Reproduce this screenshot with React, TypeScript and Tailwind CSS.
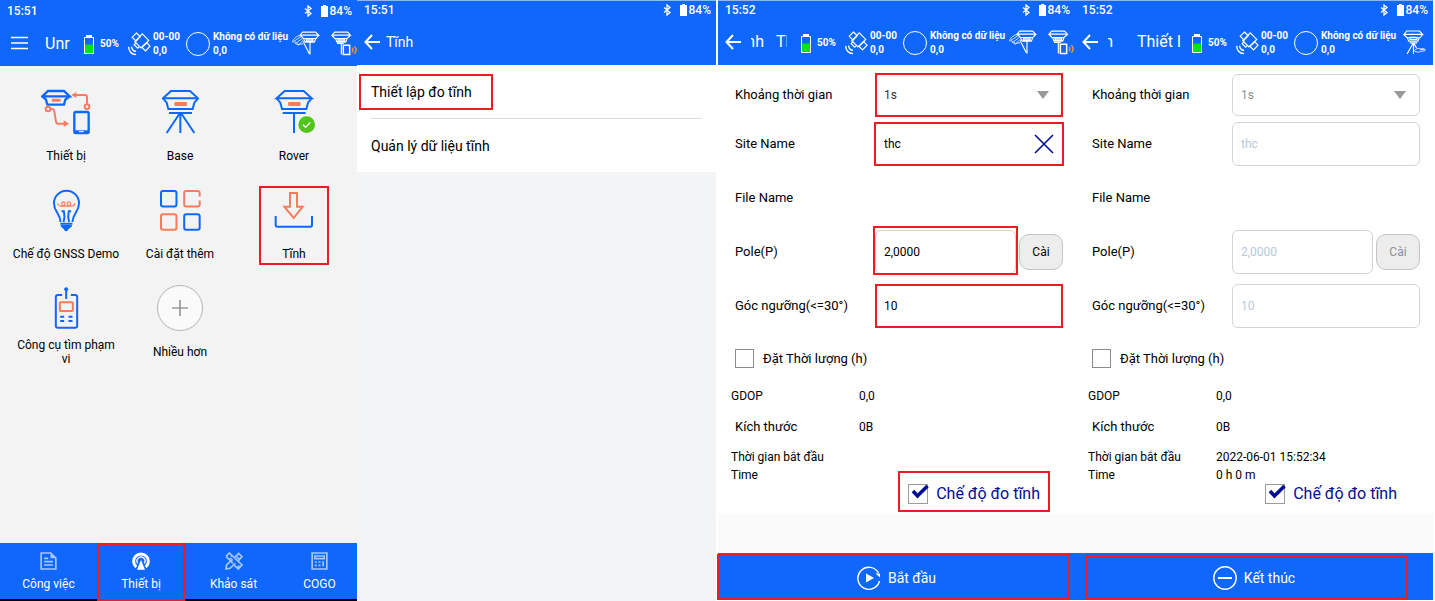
import React, { useState } from "react";

const BLUE = "#1067fb";
const ORANGE = "#f47d5f";

/* ---------- status / header icons ---------- */

const BluetoothIcon = () => (
  <svg viewBox="0 0 8 12" className="h-[12px] w-[8px]" fill="none" stroke="#fff" strokeWidth="1.3">
    <path d="M1 3.5 7 8.5 4 11V1l3 2.5-6 5" />
  </svg>
);

const PhoneBatteryIcon = () => (
  <svg viewBox="0 0 7 12" className="h-[12px] w-[7px]" fill="#fff">
    <path d="M2 0h3v1h2v11H0V1h2z" />
  </svg>
);

const MenuIcon = () => (
  <svg viewBox="0 0 17 14" className="h-[14px] w-[17px]" stroke="#fff" strokeWidth="1.7">
    <path d="M0 1.5h17M0 7h17M0 12.5h17" />
  </svg>
);

const ArrowLeftIcon = () => (
  <svg viewBox="0 0 16 16" className="h-[16px] w-[16px]" fill="none" stroke="#fff" strokeWidth="2">
    <path d="M8 1 1.5 8 8 15M1.5 8H16" />
  </svg>
);

const BatteryIcon = () => (
  <svg viewBox="0 0 10 19" className="h-[19px] w-[10px]">
    <path d="M2 0h6v2H2z" fill="#fff" />
    <path d="M.5 2.5h9v16h-9z" fill="none" stroke="#fff" />
    <path d="M1 9.5h8V18H1z" fill="#00e613" />
  </svg>
);

const SatelliteIcon = () => (
  <svg viewBox="378 92 72 74" className="h-[24px] w-[24px]" fill="none" stroke="#fff" strokeWidth="3.6">
    <path d="M406 95 418 107 405 120 393 108z" />
    <path d="M424 98 444 118 420 141 401 122z" />
    <path d="M438 125 448 136 434 150 423 139z" />
    <path d="M404 126 399 131 410 142 415 137" />
    <path d="M382 138c1 14 10 23 23 24M391 137c1 10 6 14 14 15" strokeWidth="4" />
  </svg>
);

const ReceiverHandIcon = () => (
  <svg viewBox="879 94 84 74" className="h-[25px] w-[28px]" fill="none" stroke="#fff" strokeWidth="3.4">
    <path d="M911 97h39l9 9h-56zM905 107l8 9h38l8-9M914 117l4 10h28l4-10M922 118h20v5h-20zM933 128v36M915 130l16 32" />
    <path
      d="M904 107c-10 1-20 8-24 19 8 0 15 2 18 8l14-2 2-9M885 124l22-14M893 128l17-12M888 130l10 6 14-14"
      strokeWidth="3"
      opacity=".75"
    />
  </svg>
);

const ReceiverPhoneIcon = () => (
  <svg viewBox="994 94 78 74" className="h-[25px] w-[26px]" fill="none" stroke="#fff" strokeWidth="3.4">
    <path d="M1005 97h39l8 9h-55zM997 107l9 9h36l10-9M1008 117l4 10h26l4-10M1015 118h20v5h-20zM1012 131h20M1025 132v32" />
    <path d="M1031 136h19v28h-19z" fill={BLUE} strokeWidth="4.5" />
    <path d="M1057 144c4 4 4 9 0 13M1064 139c7 7 7 16 0 23" stroke="#f09a28" strokeWidth="4" />
  </svg>
);

const ReceiverTripodIcon = () => (
  <svg viewBox="1002 91 68 74" className="h-[25px] w-[23px]" fill="none" stroke="#fff" strokeWidth="3.4">
    <path d="M1013 94h38l9 10h-55zM1005 105l9 9h38l8-9M1015 115l4 9h27l4-9M1023 113h20v6h-20zM1022 129h22M1032 130l-18 32M1033 130v32M1034 130l8 14" />
    <path d="M1036 153c4-8 12-9 18-6 8-2 14 0 14 3s-6 4-14 4c-6 4-12 3-18-1zM1052 149h12" strokeWidth="2.5" />
  </svg>
);

/* ---------- home screen icons ---------- */

const ReceiverHead = () => (
  <>
    <path d="M3 25 27 3h57l24 22z" />
    <path d="M3 25 14 38l5 19h73l5-19 11-13" />
    <rect x="37" y="36" width="38" height="12" rx="4" fill={ORANGE} stroke="none" />
    <path d="M21 69h69" />
  </>
);

const DeviceIcon = () => (
  <svg viewBox="122 270 150 138" className="h-[46px] w-[50px]" fill="none" stroke={BLUE} strokeWidth="7">
    <path d="M126 292 143 276h48l17 16zM126 292l11 10 4 15h50l4-15 13-10" />
    <rect x="154" y="299" width="27" height="9" rx="3" fill={ORANGE} stroke="none" />
    <rect x="222" y="339" width="43" height="63" rx="4" />
    <path d="M223 398h41" strokeWidth="8" />
    <path d="M236 398h14" stroke="#fff" strokeWidth="3" />
    <g stroke={ORANGE} strokeWidth="6">
      <circle cx="260" cy="323" r="7" />
      <path d="M260 314v-20q0-6-6-6h-28" />
      <path d="M228 279v18l-15-9z" fill={ORANGE} stroke="none" />
      <circle cx="143" cy="330" r="7" />
      <path d="M151 330h4q6 0 7 8l5 30q1 6 7 6h18" />
      <path d="M190 364v20l16-10z" fill={ORANGE} stroke="none" />
    </g>
  </svg>
);

const BaseIcon = () => (
  <svg viewBox="0 0 111 132" className="h-[44px] w-[37px]" fill="none" stroke={BLUE} strokeWidth="6">
    <ReceiverHead />
    <path d="M55 70v59M52 72 14 129M59 72l38 57" />
  </svg>
);

const RoverIcon = () => (
  <svg viewBox="-8 0 126 132" className="h-[44px] w-[42px]" fill="none" stroke={BLUE} strokeWidth="6">
    <ReceiverHead />
    <path d="M55 70v59" />
    <circle cx="93" cy="104" r="25" fill="#52c41a" stroke="none" />
    <path d="m82 104 8 8 14-15" stroke="#fff" strokeWidth="4" />
  </svg>
);

const BulbIcon = () => (
  <svg viewBox="155 27 88 130" className="h-[43px] w-[29px]" fill="none" stroke={BLUE} strokeWidth="6">
    <path d="M181 127c-1-27-20-30-20-57a38 38 0 0 1 76 0c0 27-19 30-20 57" />
    <path d="M184 94h7q4 16-1 33M213 94h-7q-4 16 1 33M180 132h37M182 139h33" />
    <path d="M184 141h29q-4 6-8 7-2 7-7 7t-7-7q-4-1-7-7z" fill={BLUE} stroke="none" />
    <path
      d="M172 70c2 10 10 10 16 8 10-3 8-12 2-12-8 0-8 12 2 13h12c10-1 10-13 2-13-6 0-8 9 2 12 6 2 14 2 17-8"
      stroke={ORANGE}
      strokeWidth="3.6"
    />
  </svg>
);

const SettingsGridIcon = () => (
  <svg viewBox="0 0 122 122" className="h-[41px] w-[41px]" fill="none" stroke={BLUE} strokeWidth="6">
    <rect x="3" y="3" width="46" height="46" rx="6" />
    <path d="M118 19V9q0-6-6-6H78q-6 0-6 6v34q0 6 6 6h34q6 0 6-6V31" stroke={ORANGE} />
    <rect x="3" y="72" width="46" height="46" rx="6" stroke={ORANGE} />
    <rect x="72" y="72" width="46" height="46" rx="6" />
  </svg>
);

const StaticIcon = () => (
  <svg viewBox="825 33 120 114" className="h-[38px] w-[40px]" fill="none" stroke={BLUE} strokeWidth="6">
    <path d="M830 108v27q0 5 5 5h99q5 0 5-5v-27" />
    <path d="M873 39h21v41h17l-27 34-28-34h17z" stroke={ORANGE} />
  </svg>
);

const FinderIcon = () => (
  <svg viewBox="162 321 74 126" className="h-[42px] w-[25px]" fill="none" stroke={BLUE} strokeWidth="6">
    <path d="M186 345h-13q-6 0-6 6v86q0 6 6 6h52q6 0 6-6v-86q0-6-6-6h-13M198 328v29" />
    <circle cx="198" cy="328" r="6" fill={BLUE} stroke="none" />
    <rect x="179" y="367" width="39" height="26" rx="2" stroke={ORANGE} />
    <path d="M180 410h12M205 410h12M180 423h12M205 423h12" />
  </svg>
);

const MoreIcon = () => (
  <svg viewBox="0 0 46 46" className="h-[46px] w-[46px]" fill="none">
    <circle cx="23" cy="23" r="22.5" fill="#fafafa" stroke="#b5b5b5" />
    <path d="M23 15v16M15 23h16" stroke="#9a9a9a" strokeWidth="1.7" />
  </svg>
);

/* ---------- tab bar icons ---------- */

const JobIcon = () => (
  <svg viewBox="0 0 50 54" className="h-[18px] w-[17px]" fill="none" stroke="#a6c6ff" strokeWidth="5">
    <path d="M3 3h29l15 15v33H3zM12 19h12M12 29h26M12 39h26" />
    <path d="M31 3v16h16z" fill="#a6c6ff" stroke="none" />
  </svg>
);

const AntennaIcon = () => (
  <svg viewBox="0 0 54 54" className="h-[18px] w-[18px]" fill="none" stroke="#fff">
    <path d="M13 45a22 22 0 1 1 28 0" strokeWidth="9" />
    <path d="M17 34a12 12 0 1 1 20 0" strokeWidth="4" />
    <path d="M27 24 39 53H15z" fill="#fff" stroke="none" />
  </svg>
);

const SurveyIcon = () => (
  <svg viewBox="0 0 54 54" className="h-[18px] w-[18px]" fill="none" stroke="#a6c6ff" strokeWidth="5">
    <path d="M3 13 13 3l38 36-11 12-12-11M24 34 3 13M14 23l5-5M22 9l-4 5M38 46l5-5" />
    <path d="m30 15 11-11 10 10-11 12M23 22 5 38 3 51l12-2 16-15M33 12l9 9" />
  </svg>
);

const CogoIcon = () => (
  <svg viewBox="0 0 50 54" className="h-[18px] w-[17px]" fill="none" stroke="#a6c6ff" strokeWidth="5">
    <path d="M3 3h44v48H3zM11 12h28v8H11z" />
    <path d="M11 30h6M22 30h6M11 40h6M22 40h6M36 28v15" />
  </svg>
);

/* ---------- shared parts ---------- */

const StatusBar = ({ time }: { time: string }) => (
  <div className="flex h-[18px] items-center pl-[7px] pr-[5px] text-[12px] font-medium leading-[18px]">
    <span className="flex-1">{time}</span>
    <BluetoothIcon />
    <span className="ml-[9px] flex items-center gap-[2px]">
      <PhoneBatteryIcon />
      84%
    </span>
  </div>
);

const GnssStatus = () => (
  <div className="flex shrink-0 items-center whitespace-nowrap pt-[2px] text-[10px] font-bold leading-[14px]">
    <BatteryIcon />
    <span className="ml-[6px] w-[20px]">50%</span>
    <span className="ml-[7px]">
      <SatelliteIcon />
    </span>
    <span className="ml-[2px] w-[27px]">
      00-00
      <br />
      0,0
    </span>
    <span className="ml-[6px] h-[24px] w-[24px] rounded-full border border-white" />
    <span className="ml-[3px] w-[76px]">
      Không có dữ liệu
      <br />
      0,0
    </span>
  </div>
);

const Frame = ({ className }: { className: string }) => (
  <span className={`pointer-events-none absolute border-2 border-[#ed1c24] ${className}`} />
);

/* ---------- screen 1 ---------- */

const apps = [
  { name: "Thiết bị", icon: <DeviceIcon /> },
  { name: "Base", icon: <BaseIcon /> },
  { name: "Rover", icon: <RoverIcon /> },
  { name: "Chế độ GNSS Demo", icon: <BulbIcon /> },
  { name: "Cài đặt thêm", icon: <SettingsGridIcon /> },
  { name: "Tĩnh", icon: <StaticIcon />, marked: true },
  { name: "Công cụ tìm phạm vi", icon: <FinderIcon /> },
  { name: "Nhiều hơn", icon: <MoreIcon /> },
];

const tabs = [
  { name: "Công việc", icon: <JobIcon /> },
  { name: "Thiết bị", icon: <AntennaIcon />, marked: true },
  { name: "Khảo sát", icon: <SurveyIcon /> },
  { name: "COGO", icon: <CogoIcon /> },
];

const HomeScreen = () => (
  <section className="flex min-w-0 flex-col bg-[#f3f3f3]">
    <header className="h-[66px] bg-[#1067fb] pt-[2px] text-white">
      <StatusBar time="15:51" />
      <div className="flex h-[46px] items-center pl-[11px]">
        <button aria-label="Menu">
          <MenuIcon />
        </button>
        <h1 className="ml-[17px] min-w-0 flex-1 overflow-hidden pt-[2px] text-[16px]">Unr</h1>
        <GnssStatus />
        <span className="ml-[3px] flex gap-[11px]">
          <ReceiverHandIcon />
          <ReceiverPhoneIcon />
        </span>
      </div>
    </header>
    <main className="grid flex-1 grid-cols-3 content-start gap-y-[12px] pl-[9px] pr-[6px] pt-[18px]">
      {apps.map((app) => (
        <button key={app.name} className="relative flex flex-col items-center">
          <span className="flex h-[56px] items-center">{app.icon}</span>
          <span className="mt-[2px] flex h-[28px] items-center px-[3px] text-[12px] leading-[14px]">{app.name}</span>
          {app.marked && <Frame className="inset-x-[22px] bottom-[3px] top-[4px]" />}
        </button>
      ))}
    </main>
    <nav className="grid h-[58px] grid-cols-[97fr_88fr_97fr_75fr] border-b-2 border-black bg-[#1067fb] text-white">
      {tabs.map((tab) => (
        <button key={tab.name} className="relative flex flex-col items-center pt-[9px]">
          {tab.icon}
          <span className="mt-[6px] whitespace-nowrap text-[12px] leading-[16px]">{tab.name}</span>
          {tab.marked && <Frame className="-bottom-[2px] inset-x-0 top-0" />}
        </button>
      ))}
    </nav>
  </section>
);

/* ---------- screen 2 ---------- */

const StaticMenuScreen = () => (
  <section className="min-w-0 bg-[#f3f4f6]">
    <header className="h-[65px] border-t border-[#8fb6fd] bg-[#1067fb] text-white">
      <StatusBar time="15:51" />
      <div className="flex h-[46px] items-center pl-[7px]">
        <button aria-label="Back">
          <ArrowLeftIcon />
        </button>
        <h1 className="ml-[6px] text-[14px]">Tĩnh</h1>
      </div>
    </header>
    <ul className="bg-white px-[14px] text-[14px]">
      <li className="relative border-b border-[#dcdcdc]">
        <button className="block h-[53px] w-full pt-[2px] text-left">Thiết lập đo tĩnh</button>
        <Frame className="-left-[12px] top-[9px] h-[36px] w-[134px]" />
      </li>
      <li>
        <button className="block h-[53px] w-full pt-[2px] text-left">Quản lý dữ liệu tĩnh</button>
      </li>
    </ul>
  </section>
);

/* ---------- screens 3 and 4 ---------- */

type SurveyScreenProps = {
  id: string;
  running?: boolean;
  title: React.ReactNode;
  headerIcons: React.ReactNode;
  startTime?: string;
  duration?: string;
};

const SurveyScreen = ({ id, running, title, headerIcons, startTime, duration }: SurveyScreenProps) => {
  const [site, setSite] = useState("thc");
  const [pole, setPole] = useState("2,0000");
  const [angle, setAngle] = useState("10");
  const [limited, setLimited] = useState(false);
  const [staticMode, setStaticMode] = useState(true);

  const box = "block h-full w-full appearance-none rounded-[6px] border border-[#d4d4d4] bg-white px-[8px] text-[12px]";
  const field = `${box} disabled:text-[#b9c8dd]`;
  const label = "w-[140px] shrink-0";
  const marked = !running;

  return (
    <section
      className={`flex min-w-0 flex-col border-white bg-[#fafafa] ${running ? "border-r-2" : "border-l-2"}`}
    >
      <header className="h-[65px] border-t border-[#8fb6fd] bg-[#1067fb] text-white">
        <StatusBar time="15:52" />
        <div className="flex h-[46px] items-center pl-[7px]">
          <button aria-label="Back">
            <ArrowLeftIcon />
          </button>
          {title}
          <GnssStatus />
          {headerIcons}
        </div>
      </header>

      <form
        className={`h-[449px] bg-white pl-[17px] pt-[9px] text-[13px] ${running ? "pr-[13px]" : "pr-[12px]"}`}
        onSubmit={(e) => e.preventDefault()}
      >
        <div className="flex h-[42px] items-center">
          <label htmlFor={`${id}-interval`} className={label}>
            Khoảng thời gian
          </label>
          <div className="relative h-full flex-1">
            <select
              id={`${id}-interval`}
              className={`${box} text-[#333] disabled:text-[#8f8f8f] disabled:opacity-100`}
              disabled={running}
            >
              <option>1s</option>
            </select>
            <svg viewBox="0 0 12 8" className="pointer-events-none absolute right-[14px] top-[17px] h-[8px] w-[12px]" fill="#999">
              <path d="M0 0h12L6 8z" />
            </svg>
            {marked && <Frame className="-inset-y-px inset-x-0" />}
          </div>
        </div>
        <div className="mt-[6px] flex h-[44px] items-center">
          <label htmlFor={`${id}-site`} className={label}>
            Site Name
          </label>
          <div className="relative h-full flex-1">
            <input id={`${id}-site`} className={field} value={site} onChange={(e) => setSite(e.target.value)} disabled={running} />
            {marked && (
              <button type="button" aria-label="Clear" className="absolute right-[9px] top-[12px]" onClick={() => setSite("")}>
                <svg viewBox="0 0 20 20" className="h-[20px] w-[20px]" stroke="#000c96" strokeWidth="1.6">
                  <path d="m1 1 18 18M19 1 1 19" />
                </svg>
              </button>
            )}
            {marked && <Frame className="-inset-x-px inset-y-0" />}
          </div>
        </div>
        <div className="flex h-[64px] items-center">File Name</div>
        <div className="flex h-[44px] items-center">
          <label htmlFor={`${id}-pole`} className={label}>
            Pole(P)
          </label>
          <div className="relative h-full flex-1">
            <input id={`${id}-pole`} className={field} value={pole} onChange={(e) => setPole(e.target.value)} disabled={running} />
            {marked && <Frame className="-bottom-px -inset-x-[2px] -top-[4px]" />}
          </div>
          <button
            type="button"
            disabled={running}
            className="ml-[3px] h-[36px] w-[44px] rounded-[10px] border border-[#c4c4c4] bg-[#ededed] text-[12px] disabled:text-[#8f8f8f]"
          >
            Cài
          </button>
        </div>
        <div className="mt-[10px] flex h-[44px] items-center">
          <label htmlFor={`${id}-angle`} className={label}>
            Góc ngưỡng(&lt;=30°)
          </label>
          <div className="relative h-full flex-1">
            <input id={`${id}-angle`} className={field} value={angle} onChange={(e) => setAngle(e.target.value)} disabled={running} />
            {marked && <Frame className="inset-0" />}
          </div>
        </div>
        <label className="mt-[21px] flex h-[19px] items-center gap-[9px]">
          <input
            type="checkbox"
            className="h-[19px] w-[19px] appearance-none border border-[#8c8c8c] bg-white"
            checked={limited}
            onChange={(e) => setLimited(e.target.checked)}
          />
          Đặt Thời lượng (h)
        </label>
        <dl className="-ml-[4px] mt-[12px] grid grid-cols-[128px_1fr] text-[12px] leading-[18px]">
          <dt className="h-[31px] pt-[7px]">GDOP</dt>
          <dd className="h-[31px] pt-[7px]">0,0</dd>
          <dt className="h-[31px] pl-[4px] pt-[7px] text-[13px] leading-[18px]">Kích thước</dt>
          <dd className="h-[31px] pt-[7px]">0B</dd>
          <dt className="pt-[6px]">Thời gian bắt đầu</dt>
          <dd className="pt-[6px]">{startTime}</dd>
          <dt>Time</dt>
          <dd>{duration}</dd>
        </dl>
        <div className="flex justify-end pr-[13px]">
          <label className="relative flex h-[20px] items-center gap-[8px] px-[10px] text-[16px] leading-[20px] text-[#000c96]">
            <input
              type="checkbox"
              className="peer h-[20px] w-[20px] appearance-none border border-[#9a9a9a] bg-white"
              checked={staticMode}
              onChange={(e) => setStaticMode(e.target.checked)}
            />
            <svg
              viewBox="0 0 18 15"
              className="pointer-events-none invisible absolute left-[13px] top-0 h-[15px] w-[18px] peer-checked:visible"
              fill="none"
              stroke="#000c96"
              strokeWidth="3.6"
            >
              <path d="m2 7 4.5 5L16.5 2" />
            </svg>
            Chế độ đo tĩnh
            {marked && <Frame className="-bottom-[8px] -top-[13px] inset-x-0" />}
          </label>
        </div>
      </form>

      <footer className="mt-auto border-b border-white">
        <button className="relative flex h-[47px] w-full items-center justify-center gap-[7px] bg-[#1067fb] pt-[3px] text-[14px] text-white">
          <svg viewBox="0 0 24 24" className="h-[24px] w-[24px]" fill="none" stroke="#fff" strokeWidth="1.4">
            {running ? (
              <>
                <circle cx="12" cy="12" r="11.2" />
                <path d="M5 12h14" strokeWidth="2" />
              </>
            ) : (
              <>
                <path d="M21.5 7A11 11 0 1 0 22.5 15" />
                <path d="M18.500 7.500h4.500v4z" fill="#fff" stroke="none" />
                <path d="M9 7.500v9l8-4.500z" fill="#fff" stroke="none" />
              </>
            )}
          </svg>
          {running ? "Kết thúc" : "Bắt đầu"}
          <Frame className={running ? "bottom-[1px] left-[10px] right-[25px] top-[3px]" : "-left-px bottom-0 right-[5px] top-px"} />
        </button>
      </footer>
    </section>
  );
};

export default function App() {
  return (
    <div className="grid min-h-screen grid-cols-[357fr_359fr_359fr_360fr] bg-white font-['Roboto',sans-serif] text-black">
      <HomeScreen />
      <StaticMenuScreen />
      <SurveyScreen
        id="setup"
        title={
          <h1 className="ml-[10px] mr-[14px] flex min-w-0 flex-1 gap-[12px] overflow-hidden text-[16px]">
            <span className="flex w-[13px] shrink-0 justify-end overflow-hidden">nh</span>
            <span className="overflow-hidden">Th</span>
          </h1>
        }
        headerIcons={
          <span className="ml-[3px] mr-px flex gap-[11px]">
            <ReceiverHandIcon />
            <ReceiverPhoneIcon />
          </span>
        }
      />
      <SurveyScreen
        id="session"
        running
        startTime="2022-06-01 15:52:34"
        duration="0 h 0 m"
        title={
          <h1 className="ml-[10px] mr-[10px] flex min-w-0 flex-1 gap-[24px] overflow-hidden whitespace-nowrap text-[16px]">
            <span className="flex w-[5px] shrink-0 justify-end overflow-hidden">n</span>
            <span className="shrink-0">Thiết l</span>
          </h1>
        }
        headerIcons={
          <span className="ml-[6px] mr-[7px]">
            <ReceiverTripodIcon />
          </span>
        }
      />
    </div>
  );
}
